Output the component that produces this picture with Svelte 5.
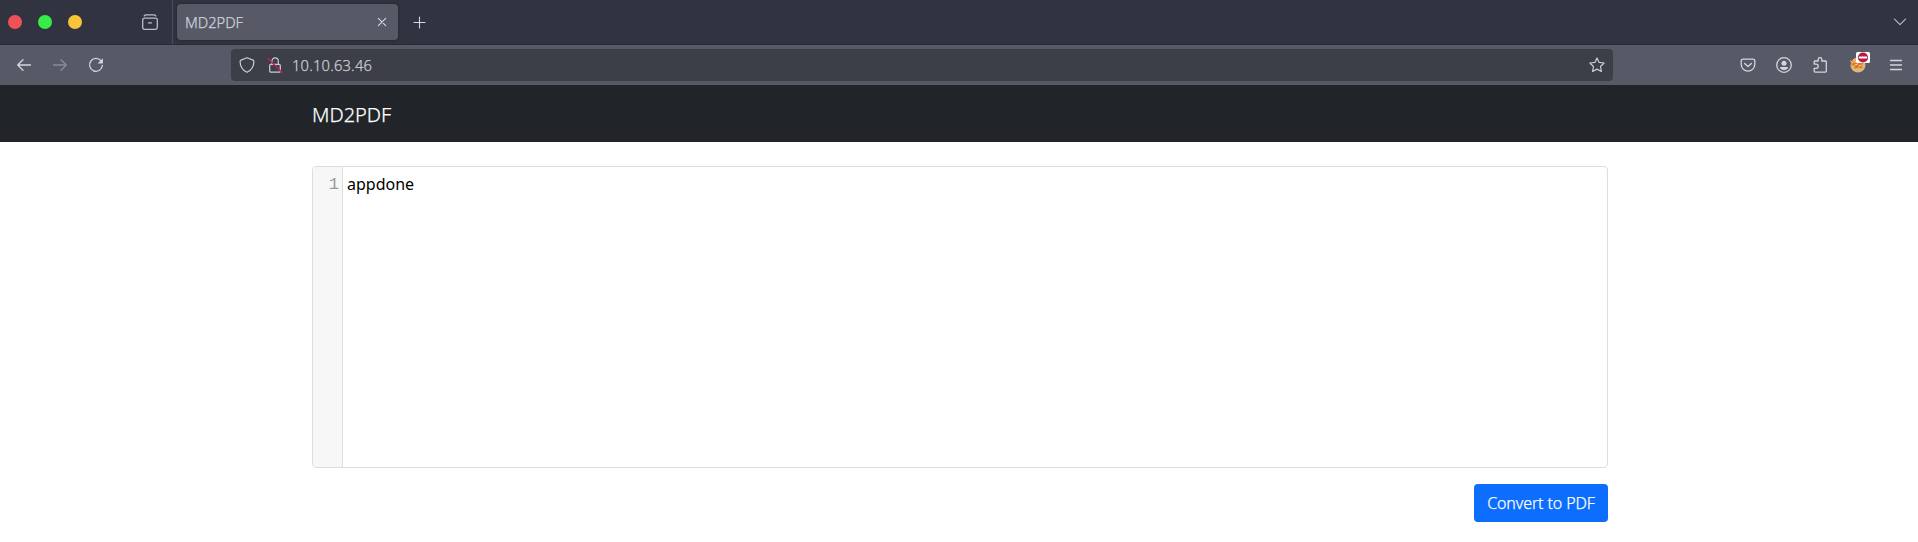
<script>
  const lights = ['#ee5257', '#35ec48', '#f8c53a'];
  let text = 'appdone';
</script>

<div class="tabs">
  <div class="lights">
    {#each lights as c}<i style="background:{c}"></i>{/each}
  </div>
  <svg class="archive" width="16" height="16" viewBox="0 0 16 16"><path d="M2.300 1.900Q2.900.8 4.300.8h7.400q1.400 0 2 1.100M6.500 8.900h3"/><rect x=".7" y="4.200" width="14.600" height="11.100" rx="1.700"/></svg>
  <div class="sep"></div>
  <div class="tab">
    <span>MD2PDF</span>
    <svg width="10" height="10" viewBox="0 0 10 10"><path d="M1.300 1.300l7.400 7.400M8.700 1.300L1.300 8.700"/></svg>
  </div>
  <svg class="plus" width="13" height="13" viewBox="0 0 13 13"><path d="M6.500 1v11M1 6.500h11"/></svg>
  <svg class="chev" width="14" height="8" viewBox="0 0 14 8"><path d="M1.500 1.200L7 6.700l5.500-5.500"/></svg>
</div>

<div class="toolbar">
  <div class="nav">
    <svg width="16" height="16" viewBox="0 0 16 16"><path d="M7 2.700L1.700 8 7 13.300M1.700 8H14.500"/></svg>
    <svg class="dim" width="16" height="16" viewBox="0 0 16 16"><path d="M9 2.700L14.300 8 9 13.300M14.300 8H1.500"/></svg>
    <svg width="16" height="16" viewBox="0 0 16 16"><path d="M13.400 4.400A6.400 6.400 0 1 0 14.400 8.300"/><path class="fill" d="M14.900 1.200v5.300H9.600z"/></svg>
  </div>
  <div class="url">
    <svg width="16" height="16" viewBox="0 0 16 16"><path d="M8 .8L14 3.100q.9.4.9 1.300C14.900 9.500 12 13.300 8 15.300 4 13.300 1.100 9.500 1.100 4.400q0-.9.9-1.300z"/></svg>
    <svg class="lock" width="16" height="16" viewBox="0 0 16 16"><rect x="2.700" y="7.300" width="10.600" height="7.900" rx="1.300"/><path d="M4.900 7.200V4.100a3.200 3.200 0 0 1 6.400 0v3.100"/><path class="red" d="M1.200 1.700L14.800 15.300"/></svg>
    <span>10.10.63.46</span>
    <svg class="star" width="16" height="16" viewBox="0 0 16 16"><path d="M8 .9l2.100 4.500 5 .6-3.600 3.500.9 5L8 12.100l-4.400 2.400.9-5L.9 6l5-.6z"/></svg>
  </div>
  <div class="actions">
    <svg width="16" height="16" viewBox="0 0 16 16"><path d="M3 2.200h10a1.800 1.800 0 0 1 1.800 1.800v3.300a6.800 6.800 0 0 1-13.600 0V4A1.800 1.800 0 0 1 3 2.200zM4.600 6.500L8 9.500l3.400-3"/></svg>
    <svg width="16" height="16" viewBox="0 0 16 16"><circle cx="8" cy="8" r="7.300"/><circle class="fill" cx="8" cy="6.200" r="2.500"/><path class="fill" d="M4 10h8c0 2-1.500 3-4 3s-4-1-4-3z"/></svg>
    <svg width="16" height="16" viewBox="0 0 16 16"><path d="M2.200 7.100V4.800q0-.8.8-.8h3.200V2.400a1.800 1.800 0 0 1 3.600 0V4h3.700q.8 0 .8.800v9.500q0 .8-.8.800H3q-.8 0-.8-.8v-3h1.900a2.100 2.100 0 0 0 0-4.200z"/></svg>
    <div class="cookie">
      <svg width="16" height="16" viewBox="0 0 16 16"><circle cx="8" cy="8" r="7.500" fill="#d6b78e" stroke="none"/><circle cx="7.500" cy="7.500" r="6.400" fill="#e8b26d" stroke="none"/><path d="M2 3l2.500 3.200 4-2.200 4.500 2-1.500 3.200 1.500 2.300-4-1-4.500 1.200L4.600 9 1 7.500z" fill="#df7620" stroke="none"/><path d="M.5 4l2.300 2M5 8l2.500-1M9 9l2-.8" stroke="#f7dfbd" stroke-width="1"/></svg>
      <svg class="badge" width="14" height="11" viewBox="0 0 14 11"><rect width="14" height="11" rx="1.500" fill="#fff" stroke="none"/><circle cx="7" cy="5.500" r="5.100" fill="#b51b3c" stroke="none"/><path d="M3.700 5.500h6.600" stroke="#fff" stroke-width="2"/></svg>
    </div>
    <svg width="14" height="16" viewBox="0 0 14 16"><path d="M1.500 3.500h11M1.500 8h11M1.500 12.500h11"/></svg>
  </div>
</div>

<nav class="navbar"><span>MD2PDF</span></nav>

<main>
  <div class="editor">
    <div class="gutter">1</div>
    <div class="code">{text}</div>
  </div>
  <button>Convert to PDF</button>
</main>

<style>
  :global(body) { background: #fff; font-family: "Noto Sans", sans-serif; font-weight: 300; }
  svg { display: block; flex: none; fill: none; stroke: #d3d6e0; stroke-width: 1.3; stroke-linecap: round; stroke-linejoin: round; }
  .fill { fill: #d3d6e0; stroke: none; }
  .tab span, .url span, .navbar span, button { -webkit-text-stroke: .25px currentColor; }
  .tabs { height: 45px; box-sizing: border-box; display: flex; align-items: center; background: #313440; border-bottom: 1px solid #292b35; padding: 0 11px 0 8px; }
  .lights { display: flex; gap: 16px; width: 134px; }
  .lights i { width: 14px; height: 14px; border-radius: 50%; }
  .archive { stroke: #b9bdc9; }
  .sep { width: 1px; height: 44px; background: #4a4d59; margin-left: 14px; }
  .tab { box-sizing: border-box; width: 221px; height: 36px; margin-left: 4px; padding: 0 11px 0 8px; border-radius: 4px; background: #575a66; box-shadow: 0 0 3px #20222b; display: flex; align-items: center; justify-content: space-between; color: #cdd1dd; font-size: 14.67px; }
  .tab svg, .plus, .chev { stroke-width: 1.1; }
  .plus { margin-left: 15px; }
  .chev { margin-left: auto; stroke: #b9bdc9; }
  .toolbar { height: 40px; box-sizing: border-box; display: flex; align-items: center; background: #575a66; padding: 0 15px 0 16px; }
  .nav { display: flex; gap: 20px; width: 215px; }
  .dim { opacity: .4; }
  .url { box-sizing: border-box; width: 1382px; height: 32px; border-radius: 4px; background: #3c3f47; display: flex; align-items: center; padding: 0 8px; color: #cbced6; font-size: 14.67px; }
  .url svg { stroke: #c9ccd6; stroke-width: 1.2; }
  .lock { margin-left: 12px; }
  .url .red { stroke: #c71f52; stroke-width: 1.4; }
  .url span { margin-left: 9px; letter-spacing: .22px; }
  .star { margin-left: auto; }
  .actions { margin-left: auto; display: flex; align-items: center; gap: 20px; }
  .cookie { position: relative; margin: 0 3px 0 2px; width: 16px; height: 16px; }
  .badge { position: absolute; left: 6px; top: -5px; }
  .navbar { height: 57px; box-sizing: border-box; padding-top: 2px; background: #212529; display: flex; align-items: center; color: #fff; font-size: 20px; }
  .navbar span { margin-left: 312px; }
  main { width: 1296px; margin: 24px 0 0 312px; display: flex; flex-direction: column; align-items: flex-end; gap: 16px; }
  .editor { box-sizing: border-box; width: 100%; height: 302px; border: 1px solid #dcdddf; border-radius: 4px; display: flex; overflow: hidden; font-size: 16px; line-height: 24px; color: #000; }
  .gutter { box-sizing: border-box; width: 30px; padding: 6px 3px 0 0; background: #f7f7f7; border-right: 1px solid #ddd; text-align: right; color: #999; font-family: "Liberation Mono", monospace; font-size: 17px; font-weight: 400; }
  .code { padding: 5px 4px; font-weight: 400; }
  button { height: 38px; width: 134px; padding: 0; border: 0; border-radius: 4px; background: #0d6efd; color: #fff; font: 300 16px/24px "Noto Sans", sans-serif; letter-spacing: -.1px; }
</style>
